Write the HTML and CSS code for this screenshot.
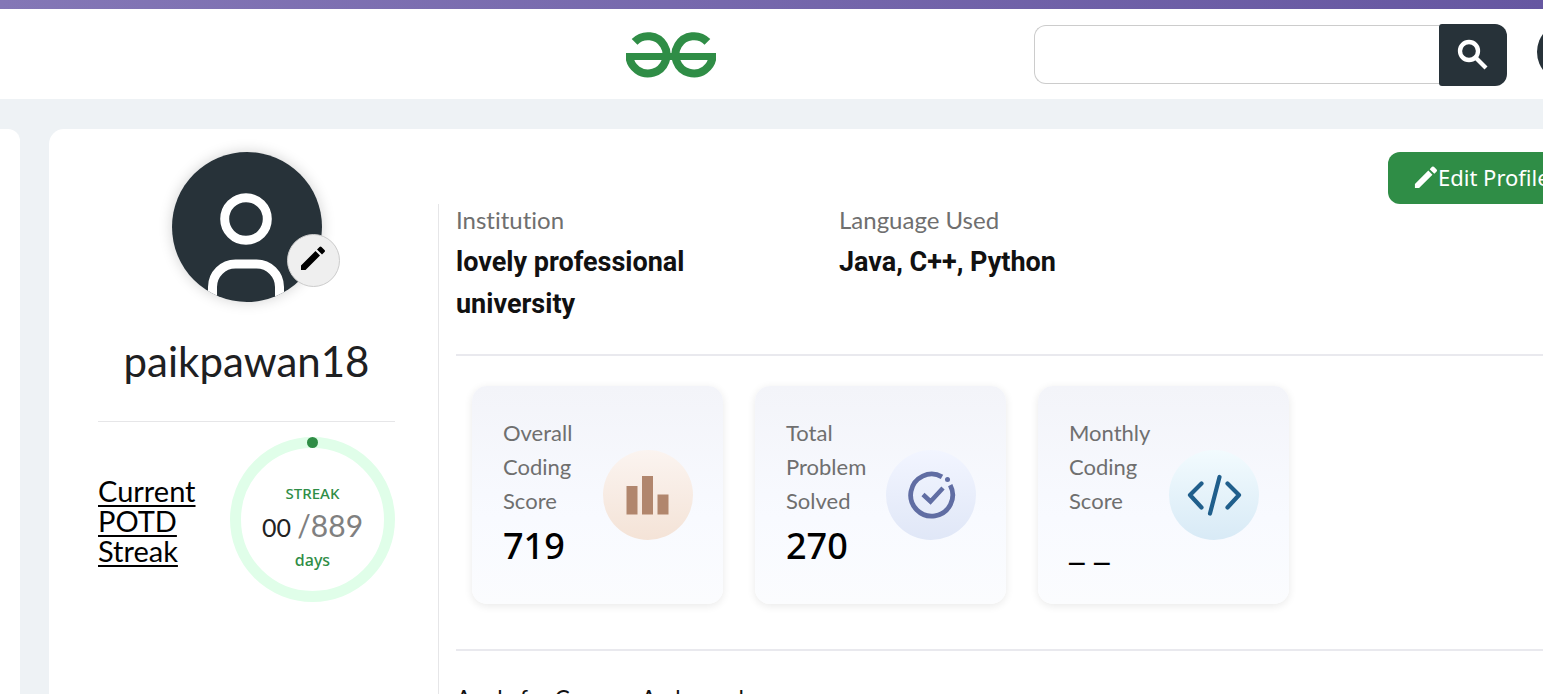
FILE: index.html
```html
<!DOCTYPE html>
<html lang="en">
<head>
<meta charset="utf-8">
<title>paikpawan18 | Profile</title>
<link rel="stylesheet" href="styles.css">
</head>
<body>
<div class="topband"></div>
<header class="header">
  <a class="logo" href="#" aria-label="Home">
    <svg width="90" height="46" viewBox="0 0 90 46" fill="none" stroke="#2f8d46" stroke-width="8">
      <path d="M8.600 9.900A18.600 18.600 0 1 1 3.400 23.500"/>
      <path d="M81.400 9.900A18.600 18.600 0 1 0 86.600 23.500"/>
      <path d="M0 24.500h90" stroke-width="7"/>
    </svg>
  </a>
  <form class="search">
    <input class="search-input" type="text" aria-label="Search">
    <button class="search-button" type="button" aria-label="Submit search">
      <svg width="32" height="32" viewBox="0 0 32 32" fill="none" stroke="#fff">
        <circle cx="12" cy="12" r="9" stroke-width="4.300"/>
        <path d="M18.500 18.500L29 29" stroke-width="4.300"/>
      </svg>
    </button>
  </form>
  <button class="account" type="button" aria-label="Account"></button>
</header>
<main class="main">
  <aside class="side"></aside>
  <section class="card">
    <div class="profile">
      <div class="avatar">
        <svg width="150" height="150" viewBox="0 0 150 150">
          <defs><clipPath id="disc"><circle cx="75" cy="75" r="75"/></clipPath></defs>
          <g clip-path="url(#disc)">
            <rect width="150" height="150" fill="#273239"/>
            <g fill="none" stroke="#fff" stroke-width="9">
              <circle cx="74" cy="67" r="21.300"/>
              <path d="M40.500 155V135A23 23 0 0 1 63.500 112H84.500A23 23 0 0 1 107.500 135V155"/>
            </g>
          </g>
        </svg>
        <button class="avatar-edit" type="button" aria-label="Edit picture">
          <svg width="26" height="26" viewBox="0 0 26 26"><path d="M1 20.500L15.500 6L20 10.500L5.500 25H1zM17 4.500L19.500 2Q20.500 1 21.500 2L24.500 5Q25.500 6 24.500 7L22 9.500z"/></svg>
        </button>
      </div>
      <h1 class="name">paikpawan18</h1>
      <div class="streak">
        <a class="streak-link" href="#">Current POTD Streak</a>
        <div class="ring">
          <span class="ring-dot"></span>
          <span class="ring-label">STREAK</span>
          <span class="ring-count">00 <span class="ring-total">/889</span></span>
          <span class="ring-label ring-days">days</span>
        </div>
      </div>
    </div>
    <div class="content">
      <button class="edit" type="button">
        <svg width="24" height="24" viewBox="0 0 26 26" fill="#fff"><path d="M1 20.500L15.500 6L20 10.500L5.500 25H1zM17 4.500L19.500 2Q20.500 1 21.500 2L24.500 5Q25.500 6 24.500 7L22 9.500z"/></svg>
        <span>Edit Profile</span>
      </button>
      <div class="details">
        <dl class="facts">
          <div class="fact"><dt>Institution</dt><dd>lovely professional university</dd></div>
          <div class="fact"><dt>Language Used</dt><dd>Java, C++, Python</dd></div>
        </dl>
        <div class="scores">
          <article class="score">
            <div class="score-text"><p class="score-label">Overall Coding Score</p><p class="score-value">719</p></div>
            <svg class="score-icon orange" viewBox="0 0 90 90" fill="#b1866d"><path d="M23.500 36h11v28.500h-11zM39 26h11v38.500H39zM54.500 44.500h11v20h-11z"/></svg>
          </article>
          <article class="score">
            <div class="score-text"><p class="score-label">Total Problem Solved</p><p class="score-value">270</p></div>
            <svg class="score-icon violet" viewBox="0 0 90 90" fill="none" stroke="#606da3">
              <path d="M56 26.800A21 21 0 1 0 64.200 35.200" stroke-width="4.800"/>
              <path d="M37 44.500L44.500 51.500L57 38" stroke-width="4.500"/>
              <circle cx="61.500" cy="29.500" r="2.500" fill="#606da3" stroke="none"/>
            </svg>
          </article>
          <article class="score">
            <div class="score-text"><p class="score-label">Monthly Coding Score</p><p class="score-value">_ _</p></div>
            <svg class="score-icon blue" viewBox="0 0 90 90" fill="none" stroke="#205f8c" stroke-width="4.200" stroke-linecap="round" stroke-linejoin="round"><path d="M32.500 33.500L21 45L32.500 57.500M58.500 33.500L70 45L58.500 57.500M50.500 27L41 63.500"/></svg>
          </article>
        </div>
        <p class="campus">Apply for Campus Ambassador</p>
      </div>
    </div>
  </section>
</main>
</body>
</html>
```
FILE: styles.css
```css
* { box-sizing: border-box; }
body {
  margin: 0;
  height: 100vh;
  overflow: hidden;
  display: flex;
  flex-direction: column;
  background: #eef2f5;
  color: #111;
  font-family: Lato, sans-serif;
  font-variant-ligatures: none;
}
button { font: inherit; border: 0; padding: 0; cursor: pointer; }
svg { display: block; flex: none; }
p, h1, dl, dd { margin: 0; }

.topband { flex: none; height: 9px; background: linear-gradient(90deg, #8477b6, #6657a1); }
.header {
  flex: none;
  height: 90px;
  display: flex;
  align-items: center;
  justify-content: flex-end;
  padding-top: 2px;
  background: #fff;
}
.logo { margin-right: 318px; }
.search { display: flex; align-items: center; width: 473px; margin-right: 30px; }
.search-input {
  flex: 1;
  min-width: 0;
  height: 59px;
  margin-bottom: 2px;
  border: 1px solid #ccc;
  border-right: 0;
  border-radius: 12px 0 0 12px;
  padding: 0 16px;
  font: 20px Lato, sans-serif;
  background: #fff;
}
.search-button {
  display: grid;
  place-items: center;
  width: 68px;
  height: 62px;
  border-radius: 3px 12px 12px 3px;
  background: #273239;
}
.account {
  flex: none;
  width: 60px;
  height: 60px;
  margin: 0 -54px 6px 0;
  border-radius: 50%;
  background: #273239;
}

.main { flex: 1; min-height: 0; display: flex; gap: 29px; padding-top: 30px; }
.side { flex: none; width: 20px; background: #fff; border-radius: 0 12px 0 0; }
.card {
  flex: 1;
  min-width: 0;
  display: flex;
  background: #fff;
  border-radius: 15px 0 0 0;
  padding: 23px 0 0 49px;
}
.profile { flex: none; width: 297px; margin-right: 43px; }
.avatar { position: relative; width: 150px; margin: 0 auto; border-radius: 50%; box-shadow: 0 0 14px rgba(0, 0, 0, .18); }
.avatar-edit {
  position: absolute;
  right: -18px;
  bottom: 15px;
  display: grid;
  place-items: center;
  width: 53px;
  height: 53px;
  padding-bottom: 6px;
  border: 1px solid #ccc;
  border-radius: 50%;
  background: #efefef;
}
.name {
  padding: 29px 0 30px;
  border-bottom: 1px solid #e6e6e8;
  font-size: 42px;
  font-weight: 400;
  line-height: 60px;
  text-align: center;
  color: #1e2022;
}
.streak { display: flex; align-items: center; justify-content: space-between; margin-top: 15px; }
.streak-link { width: 110px; padding-top: 2px; color: #000; font-size: 29px; line-height: 30px; text-underline-offset: 3px; }
.ring {
  position: relative;
  display: flex;
  flex-direction: column;
  align-items: center;
  width: 165px;
  height: 165px;
  padding-top: 35px;
  border: 11px solid #e0fee9;
  border-radius: 50%;
}
.ring-dot { position: absolute; top: -11px; width: 11px; height: 11px; border-radius: 50%; background: #2f8d46; }
.ring-label { font: 500 15px/20px "Noto Sans", sans-serif; color: #2f8d46; }
.ring-days { font-size: 16px; }
.ring-count { font-size: 25px; line-height: 45px; color: #222; }
.ring-total { font-size: 30px; color: #808080; }

.content { flex: 1; min-width: 0; }
.edit {
  display: flex;
  align-items: center;
  width: 190px;
  height: 52px;
  margin: 0 -35px 0 auto;
  padding: 0 0 2px 26px;
  border-radius: 12px;
  background: #2f8d46;
  color: #fff;
  font: 22px "Noto Sans", sans-serif;
  white-space: nowrap;
}
.details { border-left: 1px solid #e6e6e8; padding-left: 17px; height: 100%; }
.facts { display: flex; height: 152px; border-bottom: 2px solid #e9e9ee; }
.fact { width: 383px; padding-right: 100px; }
.fact dt { font-size: 24px; line-height: 32px; color: #6f6f6f; }
.fact dd { padding-top: 5px; font: 700 27px/42px Roboto, sans-serif; color: #111; }
.scores { display: flex; gap: 32px; padding: 30px 16px 45px; border-bottom: 2px solid #e9e9ee; }
.score {
  display: flex;
  align-items: center;
  justify-content: space-between;
  width: 251px;
  height: 218px;
  padding: 0 30px 0 31px;
  border-radius: 15px;
  background: linear-gradient(#f3f4f9, #f8faff 60%, #fbfcfe);
  box-shadow: 0 2px 8px rgba(0, 0, 0, .09);
}
.score-text { width: 86px; }
.score-label { font-size: 22px; line-height: 34px; color: #6f6f6f; }
.score-value { font: 500 36px/56px "Noto Sans", sans-serif; color: #000; }
.score-icon { width: 90px; height: 90px; border-radius: 50%; }
.orange { background: linear-gradient(#fbf4f0, #f4e3d7); }
.violet { background: linear-gradient(#f2f5ff, #e0e7f7); }
.blue { background: linear-gradient(#f2fbfe, #d8eaf6); }
.campus { padding-top: 30px; font-size: 23px; line-height: 34px; color: #111; white-space: nowrap; }
```
